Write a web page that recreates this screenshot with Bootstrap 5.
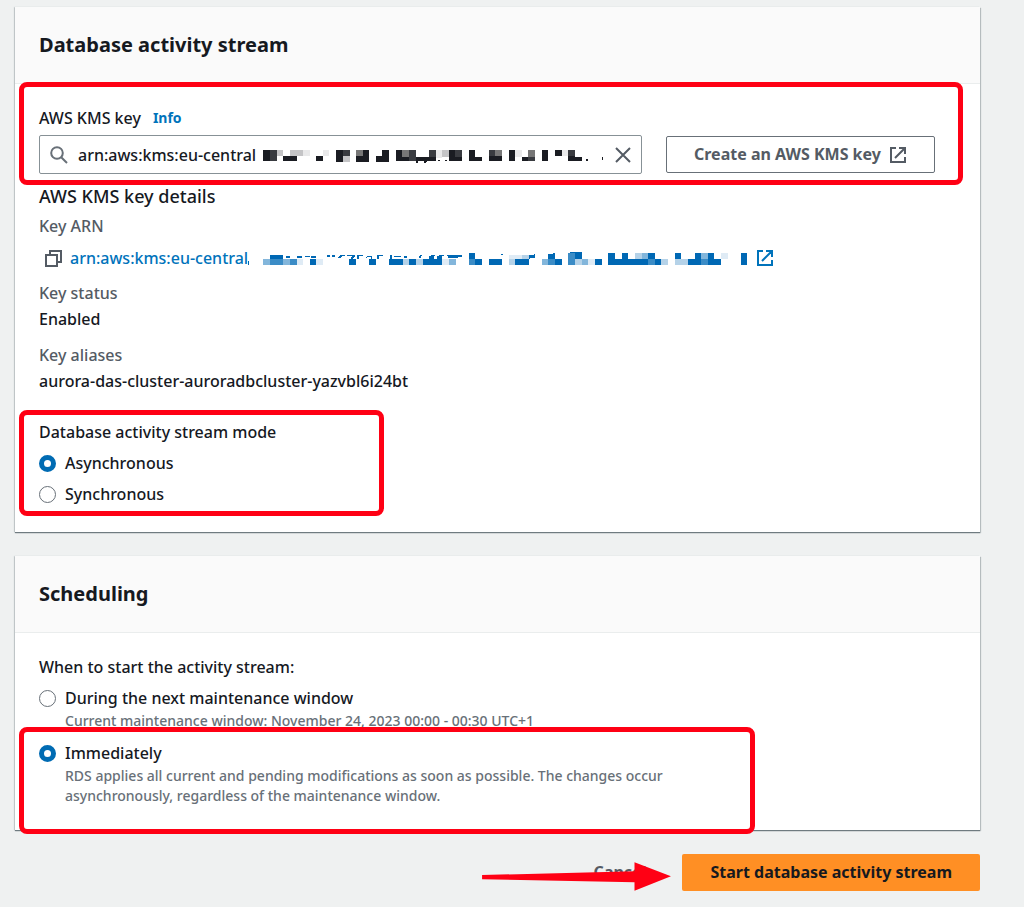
<!DOCTYPE html>
<html lang="en">
<head>
<meta charset="utf-8">
<meta name="viewport" content="width=device-width, initial-scale=1">
<title>Database activity stream</title>
<link href="https://cdn.jsdelivr.net/npm/bootstrap@5.3.0/dist/css/bootstrap.min.css" rel="stylesheet">
<style>
  body { background: #eff1f1; color: #16191f; font-family: "Noto Sans", "Open Sans", sans-serif; font-size: 16px; line-height: 24px; font-weight: 500; }
  .page { padding: 7px 44px 16px 15px; }
  .panel { border: 0; border-radius: 0; color: inherit; margin-bottom: 24px; box-shadow: 0 1px 1px #6f7b80, 1px 1px 1px #c3c9ca, -1px 0 1px #cfd4d5; }
  .panel > .card-header { background: #fafafa; border-bottom: 1px solid #eaeded; border-radius: 0; padding: 24px; }
  .panel h2 { font-size: 20px; line-height: 28px; font-weight: 700; margin: 0; }
  .panel h3 { font-size: 18px; line-height: 24px; font-weight: 500; margin: 10px 0 6px; }
  .panel > .card-body { padding: 22px 24px 24px; }
  .label-gray { color: #545b64; font-weight: 500; }
  .aws-link { color: #0073bb; text-decoration: none; }
  .info-link { font-size: 14px; font-weight: 700; }
  .key-label { margin-bottom: 5px; }
  .key-search { border: 1px solid #879196; border-radius: 2px; height: 39px; flex: 1 1 0; max-width: 603px; min-width: 0; padding: 0 10px; background: #fff; }
  .key-search input { border: 0; outline: 0; padding: 0; width: 182px; margin-left: 10px; color: inherit; font-weight: 500; background: transparent; }
  .btn-aws { border-radius: 2px; font-size: 16px; line-height: 25px; font-weight: 700; padding: 6px 28px; }
  .btn-key, .btn-key:hover { border: 1px solid #687078; color: #545b64; background: #fff; padding: 5px 27px; }
  .btn-start, .btn-start:hover { background: #ff8f24; color: #16191f; border: 0; }
  .btn-cancel, .btn-cancel:hover { border: 0; color: #545b64; }
  .clear-btn { border: 0; background: none; padding: 0; line-height: 0; }
  dl.key-facts { margin: 0; }
  .key-facts dd { margin: 2px 0 12px; }
  .key-facts .arn-row { margin: 8px 0 11px; padding-left: 6px; }
  fieldset legend { font-size: 16px; line-height: 24px; margin: 0 0 7px; float: none; }
  .choice { display: flex; gap: 9px; margin-bottom: 7px; }
  .choice input { appearance: none; flex: none; width: 17px; height: 17px; margin: 4px 0 0; border: 1px solid #687078; border-radius: 50%; background: #fff; }
  .choice input:checked { border: 5px solid #006bb3; }
  .choice label { display: block; }
  .hint { color: #687078; font-size: 14px; line-height: 20px; margin: 1px 0 3px; }
  /* red highlight frames drawn over the form */
  .marked { position: relative; }
  .marked::after { content: ""; position: absolute; border: 5px solid #ff0014; border-radius: 8px; pointer-events: none; }
  .marked-key::after { inset: -24px -7px -11px -20px; }
  .mode-set { max-width: 345px; margin: 27px 0 2px; }
  .mode-set::after { inset: -10px 0 -10px -20px; }
  .mode-set .choice:last-child { margin-bottom: 0; }
  .now-set { max-width: 716px; }
  .now-set::after { inset: -14px 0 -28px -20px; }
  .now-set .hint { margin-bottom: 0; }
  .arrow { position: absolute; right: 309px; top: 8px; }
</style>
</head>
<body>
<main class="page">
  <section class="card panel">
    <div class="card-header"><h2>Database activity stream</h2></div>
    <div class="card-body">
      <div class="marked marked-key">
        <div class="d-flex align-items-center key-label">
          <label for="kms">AWS KMS key</label>
          <a href="#" class="aws-link info-link ms-2 ps-1">Info</a>
        </div>
        <div class="d-flex align-items-center gap-4">
          <div class="key-search d-flex align-items-center">
            <svg width="18" height="18" viewBox="0 0 18 18" fill="none" stroke="#687078" stroke-width="2" class="flex-shrink-0"><circle cx="7" cy="7" r="5.8"/><path d="M11.2 11.2 17 17"/></svg>
            <input id="kms" type="text" value="arn:aws:kms:eu-central">
            <svg width="348" height="20" viewBox="30 30 1044 60" fill="#1a1c22" class="flex-shrink-0" shape-rendering="crispEdges" aria-hidden="true">
              <path d="M39 44h41v34h-41zM99 64h41v13h-41zM199 64h19v13h-19zM258 44h42v36h-42zM318 44h40v36h-40zM397 44h20v36h-39v-17h19zM437 44h20v33h-20zM457 65h100v12h-100zM497 77h8v4l-8 5zM520 75h12v5l-8 6zM565 74h6v4h-6zM585 75h5v3h-5zM596 44h40v33h-40zM657 44h19v22h20v11h-39zM716 44h20v33h-20zM736 64h20v13h-20zM776 44h20v33h-20zM816 66h39v11h-39zM875 44h20v33h-20zM915 44h20v20h-20zM955 44h20v22h20v11h-40zM1008 72h5v5h-5zM1055 66h4v10h-4z"/>
              <path fill="#393b40" d="M60 44h20v34h-20zM279 44h20v20h-20zM477 44h20v33h-20zM537 44h20v21h-20zM616 44h20v22h-20zM716 44h20v20h-20zM835 66h20v11h-20zM955 44h20v20h-20z"/>
              <path fill="#777" d="M318 44h20v19h-20zM457 44h20v21h-20zM736 44h20v20h-20zM835 44h20v22h-20z"/>
              <path fill="#c4c4c6" d="M80 44h19v19h-19zM120 44h40v19h-40zM279 64h20v16h-20zM577 44h19v21h-19z"/>
              <path fill="#e9e9ea" d="M160 44h20v19h-20zM218 44h20v19h-20zM557 44h20v26h-20zM796 44h20v22h-20zM935 44h20v20h-20z"/>
            </svg>
            <button type="button" class="clear-btn ms-auto" aria-label="Clear"><svg width="16" height="16" viewBox="0 0 16 16" fill="none" stroke="#545b64" stroke-width="2"><path d="m1 1 14 14M15 1 1 15"/></svg></button>
          </div>
          <button type="button" class="btn btn-aws btn-key d-flex align-items-center gap-2 text-nowrap">Create an AWS KMS key
            <svg width="18" height="18" viewBox="0 0 18 18" fill="none" stroke="#545b64" stroke-width="2"><path d="M7 2H2V16H16V11M10 2h6V8M16 2 6 12"/></svg></button>
        </div>
      </div>

      <h3>AWS KMS key details</h3>
      <dl class="key-facts">
        <dt class="label-gray">Key ARN</dt>
        <dd class="arn-row d-flex align-items-center">
          <svg width="17" height="17" viewBox="0 0 17 17" fill="none" stroke="#545b64" stroke-width="2" class="flex-shrink-0"><path d="M1 5h11v11H1zM5 5V1h11v11h-4"/></svg>
          <a href="#" class="aws-link d-flex align-items-center ms-2">arn:aws:kms:eu-central
            <svg width="500" height="16" viewBox="9 22 1500 48" fill="#0068b4" shape-rendering="crispEdges" aria-hidden="true">
              <path d="M5 60l8-7v14h-8zM75 37h40v11h-40zM122 39h13v8h-13zM157 40h14v5h-14zM178 42l6-3h12v5h-18zM194 48h20v19h-20zM197 39h16v6h-16zM246 38h10v4h-10zM262 38h8v4h-8zM276 46l9-9h15v4h-9l-6 6zM305 37h25v4l-5 7h-8l4-7h-16zM335 37h20v4h-14v7h-6zM362 47l4-8h16v9h-5v-5h-8zM395 37h20v4h-14v7h-6zM313 48h20v19h-20zM373 48h20v19h-20zM433 48h40v19h-40zM434 37h6v11h-6zM448 40h20v4h-20zM478 40h8v6h-8zM493 48h20v19h-20zM521 46l5-10h6l-5 10zM533 48h60v19h-60zM552 41l8-4h10v4h-4v7h-14zM577 41l8-4h11v4h-6v7h-13zM605 37h47v4l-20 6h-20zM672 32h19v16h20v19h-39zM732 48h39v19h-39zM769 34h6v3h-6zM811 48h40v19h-40zM853 38l18-3v9l-18 4zM910 34l20-2v16h20v19h-40zM970 30l40-3v21h-20v19h-20zM1050 48h20v19h-20zM1090 48h140v19h-140zM1090 30h20v18h-20zM1130 30h19v18h-19zM1210 32h19v35h-19zM1229 48h20v19h-20zM1289 30h19v18h-19zM1329 48h59v19h-59zM1349 32h19v16h-19zM1388 30h20v37h-20zM1408 48h20v19h-20zM1487 30h20v37h-20z"/>
              <path fill="#3b8cc6" d="M75 48h80v19h-80zM672 48h19v19h-19zM910 48h20v19h-20zM970 30h20v37h-20zM1210 48h19v19h-19zM1368 48h20v19h-20z"/>
              <path fill="#83b6db" d="M55 48h20v19h-20zM115 48h20v19h-20zM612 48h20v19h-20zM890 48h20v19h-20zM1010 48h20v19h-20zM1190 30h20v18h-20zM1368 32h20v16h-20z"/>
              <path fill="#b5d2e8" d="M473 48h20v19h-20zM513 48h20v19h-20zM791 48h20v19h-20zM831 37h20v11h-20zM990 48h20v19h-20zM1170 30h20v18h-20zM1249 48h20v19h-20zM1289 48h40v19h-40z"/>
              <path fill="#dfebf5" d="M155 48h19v19h-19zM214 48h20v19h-20zM592 48h20v19h-20zM791 37h40v11h-40zM1030 48h20v19h-20zM1428 30h20v18h-20z"/>
            </svg>
            <svg class="ms-2" width="18" height="18" viewBox="0 0 18 18" fill="none" stroke="#0073bb" stroke-width="2"><path d="M7 2H2V16H16V11M10 2h6V8M16 2 6 12"/></svg>
          </a>
        </dd>
        <dt class="label-gray">Key status</dt>
        <dd>Enabled</dd>
        <dt class="label-gray">Key aliases</dt>
        <dd>aurora-das-cluster-auroradbcluster-yazvbl6i24bt</dd>
      </dl>

      <div class="marked mode-set">
        <fieldset>
          <legend>Database activity stream mode</legend>
          <div class="choice"><input type="radio" name="mode" id="async" checked><label for="async">Asynchronous</label></div>
          <div class="choice"><input type="radio" name="mode" id="sync"><label for="sync">Synchronous</label></div>
        </fieldset>
      </div>
    </div>
  </section>

  <section class="card panel">
    <div class="card-header"><h2>Scheduling</h2></div>
    <div class="card-body">
      <fieldset>
        <legend>When to start the activity stream:</legend>
        <div class="choice"><input type="radio" name="when" id="window"><div><label for="window">During the next maintenance window</label><p class="hint">Current maintenance window: November 24, 2023 00:00 - 00:30 UTC+1</p></div></div>
        <div class="choice marked now-set mb-0"><input type="radio" name="when" id="now" checked><div><label for="now">Immediately</label><p class="hint">RDS applies all current and pending modifications as soon as possible. The changes occur<br>asynchronously, regardless of the maintenance window.</p></div></div>
      </fieldset>
    </div>
  </section>

  <div class="d-flex justify-content-end gap-2 position-relative">
    <button type="button" class="btn btn-aws btn-cancel">Cancel</button>
    <button type="button" class="btn btn-aws btn-start">Start database activity stream</button>
    <svg class="arrow" width="189" height="29" viewBox="34 126 534 82" fill="#ff0014" aria-hidden="true"><path d="M34 163 465 152V127L568 166 465 207V183L34 175z"/></svg>
  </div>
</main>
<script src="https://cdn.jsdelivr.net/npm/bootstrap@5.3.0/dist/js/bootstrap.bundle.min.js"></script>
</body>
</html>
